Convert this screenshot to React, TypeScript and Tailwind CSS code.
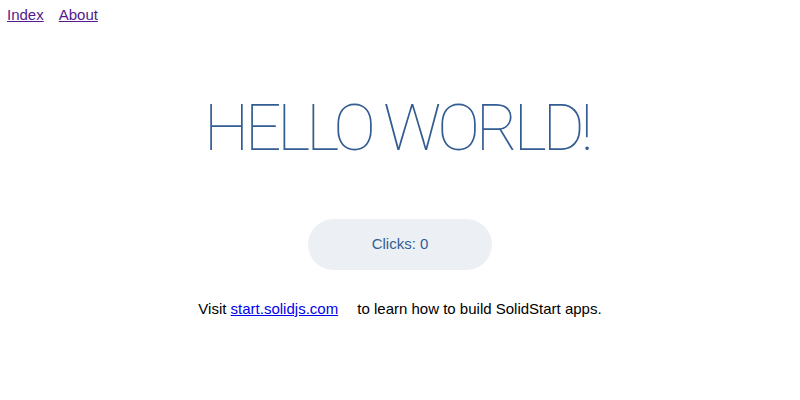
export default function App() {
  return (
    <div className="w-[800px] h-[400px] bg-white text-black font-['Liberation_Sans',Arial,sans-serif] text-[15px] overflow-hidden">
      <nav className="pl-[7px] pt-[6px] leading-[17px] flex">
        <a href="#" className="underline text-[#551a8b] mr-[15px]">Index</a>
        <a href="#" className="underline text-[#551a8b] mr-[15px]">About</a>
      </nav>
      <main className="flex flex-col items-center text-center">
        <h1 className="mt-[71px] pr-[7px] text-[64px] leading-[70px] font-thin uppercase tracking-[-4px] text-[#335d92] font-['Roboto',sans-serif]">
          Hello world!
        </h1>
        <button className="mt-[55px] w-[184px] h-[51px] rounded-full bg-[#ecf0f5] text-[#335d92] text-[15px] tabular-nums">
          Clicks: 0
        </button>
        <p className="mt-[30px] leading-[17px]">
          Visit{" "}
          <a href="#" className="underline text-[#0000ee] mr-[15px]">start.solidjs.com</a>{" "}
          to learn how to build SolidStart apps.
        </p>
      </main>
    </div>
  );
}
